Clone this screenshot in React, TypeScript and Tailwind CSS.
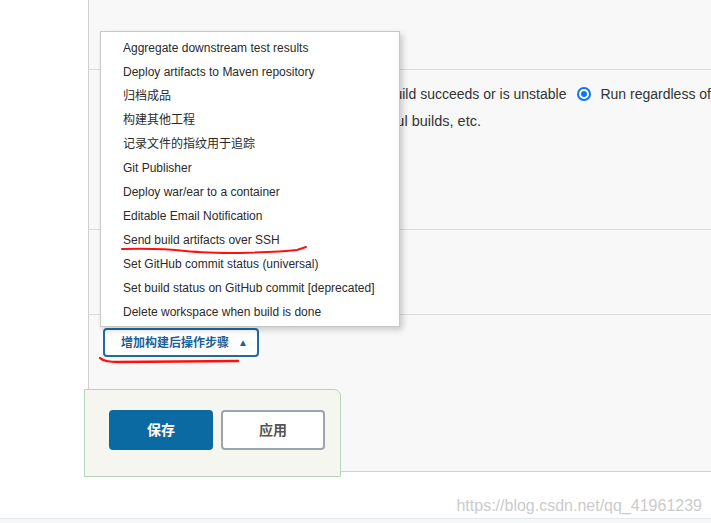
import React from "react";

const items = [
  "Aggregate downstream test results",
  "Deploy artifacts to Maven repository",
  "归档成品",
  "构建其他工程",
  "记录文件的指纹用于追踪",
  "Git Publisher",
  "Deploy war/ear to a container",
  "Editable Email Notification",
  "Send build artifacts over SSH",
  "Set GitHub commit status (universal)",
  "Set build status on GitHub commit [deprecated]",
  "Delete workspace when build is done",
];

function Radio({ checked }: { checked?: boolean }) {
  return (
    <span
      className={
        checked
          ? "w-[14px] h-[14px] rounded-full border-2 border-[#0b75ff] bg-white flex items-center justify-center shrink-0"
          : "w-[14px] h-[14px] rounded-full border border-[#767676] bg-white shrink-0"
      }
    >
      {checked && <span className="w-[6px] h-[6px] rounded-full bg-[#0b75ff]" />}
    </span>
  );
}

export default function App() {
  return (
    <div className="relative w-[711px] h-[523px] overflow-hidden bg-white font-['Liberation_Sans','Noto_Sans_CJK_SC',sans-serif] text-[#333]">
      <div className="flex flex-col h-full">
        <div className="ml-[88px] h-[472px] border-l border-b border-[#d0d0d0] bg-[#f8f8f8] flex flex-col shrink-0">
          <div className="h-[70px] border-b border-[#dddddd] shrink-0" />
          <div className="h-[160px] border-b border-[#dddddd] shrink-0 pt-[15px] text-[14px] leading-[18px] whitespace-nowrap">
            <div className="flex items-center pl-[20px]">
              <Radio />
              <span className="ml-[9px]">Run only if build succeeds</span>
              <span className="ml-[11px]"><Radio /></span>
              <span className="ml-[9px]">Run only if build succeeds or is unstable</span>
              <span className="ml-[11px]"><Radio checked /></span>
              <span className="ml-[9px]">
                Run regardless of <span className="bg-[#fbeea0]">build</span> result
              </span>
            </div>
            <div className="mt-[9px] ml-[13px] w-[379px] overflow-hidden flex justify-end">
              <span className="shrink-0 text-[14.5px]">Should the post-build steps run only for successful builds, etc.</span>
            </div>
          </div>
          <div className="h-[85px] border-b border-[#dddddd] shrink-0" />
          <div className="pl-[14px] pt-[13px]">
            <button className="h-[29px] w-[156px] flex items-center pl-[16px] border-2 border-[#1f6aa3] rounded-[4px] bg-white text-[#1a5f97] text-[12px] font-bold">
              增加构建后操作步骤
              <span className="ml-[9px] text-[10px] leading-none">▲</span>
            </button>
          </div>
        </div>
        <div className="flex-1 flex items-center justify-end pr-[9px] pt-[22px]">
          <span className="text-[16px] text-[#cbcbcb]">https://blog.csdn.net/qq_41961239</span>
        </div>
        <div className="h-[11px] border-t border-[#e3e8ea] bg-[#f5f7f8] shrink-0" />
      </div>

      {/* dropdown menu */}
      <div className="absolute left-[100px] top-[31px] w-[300px] h-[296px] bg-white border border-[#c8c8c8] shadow-[3px_3px_6px_rgba(0,0,0,0.18)] pt-[4px]">
        {items.map((t) => (
          <div key={t} className="h-[24px] flex items-center pl-[22px] text-[12px] text-[#2a2a2a] whitespace-nowrap">
            {t}
          </div>
        ))}
      </div>

      {/* bottom save bar */}
      <div className="absolute left-[84px] top-[389px] w-[257px] h-[88px] bg-[#f5f6ef] border border-[#b7d5bd] rounded-tr-[7px] pl-[24px] pt-[20px] flex gap-[8px]">
        <button className="w-[104px] h-[40px] rounded-[4px] bg-[#0c6aa3] text-white text-[14px] font-bold">
          保存
        </button>
        <button className="w-[104px] h-[40px] rounded-[4px] bg-white border-2 border-[#9aa5ad] text-[#555] text-[14px] font-bold">
          应用
        </button>
      </div>

      {/* red annotations */}
      <svg className="absolute left-0 top-0 pointer-events-none" width="711" height="523">
        <path
          d="M122 249 Q 160 248 185 251 Q 205 253 240 253 Q 280 252 297 250 L 306 247"
          stroke="#ff1010"
          strokeWidth="2"
          fill="none"
          strokeLinecap="round"
        />
        <path
          d="M100 358 Q 104 362 118 362 L 238 361"
          stroke="#ff1010"
          strokeWidth="2.4"
          fill="none"
          strokeLinecap="round"
        />
      </svg>
    </div>
  );
}
